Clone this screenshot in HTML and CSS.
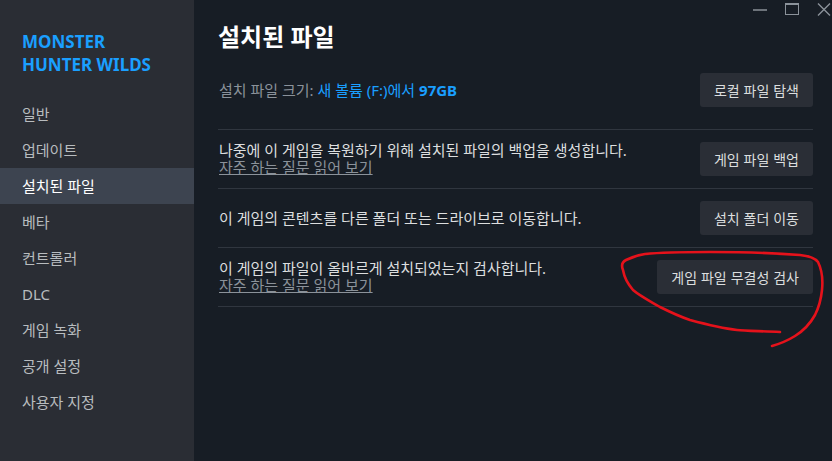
FILE: index.html
```html
<!DOCTYPE html>
<html lang="ko">
<head>
    <meta charset="UTF-8">
    <meta name="viewport" content="width=device-width, initial-scale=1.0">
    <title>설치된 파일</title>
    <link rel="stylesheet" href="styles.css">
</head>
<body>

    <nav class="sidebar">
        <div class="game-title">MONSTER<br>HUNTER WILDS</div>
        <ul class="menu">
            <li>일반</li>
            <li>업데이트</li>
            <li class="active">설치된 파일</li>
            <li>베타</li>
            <li>컨트롤러</li>
            <li>DLC</li>
            <li>게임 녹화</li>
            <li>공개 설정</li>
            <li>사용자 지정</li>
        </ul>
    </nav>

    <main class="content">
        <div class="titlebar">
            <span class="win-min"></span>
            <span class="win-max"></span>
            <svg class="win-close" width="14" height="13" viewBox="0 0 14 13"><path d="M1 0.5 L13 12.5 M13 0.5 L1 12.5" stroke="#8b929a" stroke-width="1.4" fill="none"/></svg>
        </div>

        <h1>설치된 파일</h1>

        <div class="row first">
            <div class="row-text">
                <span class="muted">설치 파일 크기: </span><span class="blue">새 볼륨 (F:)에서 <b>97GB</b></span>
            </div>
            <button class="btn">로컬 파일 탐색</button>
        </div>

        <div class="row">
            <div class="row-text">
                <div>나중에 이 게임을 복원하기 위해 설치된 파일의 백업을 생성합니다.</div>
                <a href="#" class="faq">자주 하는 질문 읽어 보기</a>
            </div>
            <button class="btn">게임 파일 백업</button>
        </div>

        <div class="row">
            <div class="row-text">
                <div>이 게임의 콘텐츠를 다른 폴더 또는 드라이브로 이동합니다.</div>
            </div>
            <button class="btn">설치 폴더 이동</button>
        </div>

        <div class="row">
            <div class="row-text">
                <div>이 게임의 파일이 올바르게 설치되었는지 검사합니다.</div>
                <a href="#" class="faq">자주 하는 질문 읽어 보기</a>
            </div>
            <button class="btn">게임 파일 무결성 검사</button>
        </div>
    </main>

    <!-- red pen circle drawn on the screenshot -->
    <svg class="scribble" width="832" height="461" viewBox="0 0 832 461">
        <path d="M780 332 C760 331 745 331 737 330 C720 328 705 324 690 320 C678 316 668 311 660 307 C648 300 640 296 633 290 C627 283 624 276 623 270 C621 265 622 262 626 260 C632 257 638 255 645 254 C665 252 690 252 710 252 C740 252 775 253 800 255 C810 256 815 258 818 262 C822 270 823 280 822 290 C821 300 819 307 815 315 C810 324 803 331 795 336 C787 341 779 344 772 346" stroke="#e5121b" stroke-width="2.6" fill="none" stroke-linecap="round" stroke-linejoin="round"/>
    </svg>

</body>
</html>
```

FILE: styles.css
```css
body {
    margin: 0;
    height: 100vh;
    display: flex;
    background: #171d25;
    font-family: "Noto Sans", "Noto Sans CJK KR", sans-serif;
    color: #dcdedf;
    position: relative;
    overflow: hidden;
}
.sidebar {
    width: 194px;
    flex-shrink: 0;
    background: #2a2d34;
    padding-top: 30px;
}
.game-title {
    color: #1a9fff;
    font-weight: bold;
    font-size: 17px;
    line-height: 23px;
    padding-left: 22px;
    margin-bottom: 20px;
}
.menu {
    list-style: none;
    margin: 0;
    padding: 0;
}
.menu li {
    height: 36px;
    line-height: 36px;
    padding-left: 22px;
    font-size: 15px;
    color: #b8bcbf;
}
.menu li.active {
    background: #3d4450;
    color: #ffffff;
}
.content {
    flex: 1;
    padding: 0 19px 0 24px;
}
.titlebar {
    height: 18px;
    display: flex;
    justify-content: flex-end;
    align-items: flex-start;
    gap: 18px;
    margin-right: -19px;
    padding-right: 1px;
}
.win-min {
    width: 14px;
    height: 2px;
    background: #6d737a;
    margin-top: 9px;
}
.win-max {
    width: 12px;
    height: 9px;
    border: 1px solid #8b929a;
    border-top-width: 2px;
    margin-top: 3px;
}
.win-close {
    margin-top: 3px;
}
h1 {
    margin: 5px 0 0 0;
    font-size: 24px;
    line-height: 28px;
    font-weight: bold;
    color: #ffffff;
}
.row {
    display: flex;
    align-items: center;
    justify-content: space-between;
    padding: 12px 0;
    border-bottom: 1px solid #30363f;
    min-height: 34px;
}
.row.first {
    padding: 0 0 22px 0;
    margin-top: 22px;
}
.row-text {
    font-size: 15px;
    line-height: 17px;
    padding-left: 1px;
}
.muted {
    color: #8b929a;
}
.blue {
    color: #1a9fff;
}
.faq {
    color: #8b929a;
    text-decoration: underline;
}
.btn {
    height: 34px;
    padding: 0 14px;
    border: none;
    border-radius: 3px;
    background: #2a2e36;
    color: #dcdedf;
    font-family: "Noto Sans CJK KR", sans-serif;
    font-size: 14px;
    cursor: pointer;
}
.scribble {
    position: absolute;
    top: 0;
    left: 0;
    pointer-events: none;
}
```
